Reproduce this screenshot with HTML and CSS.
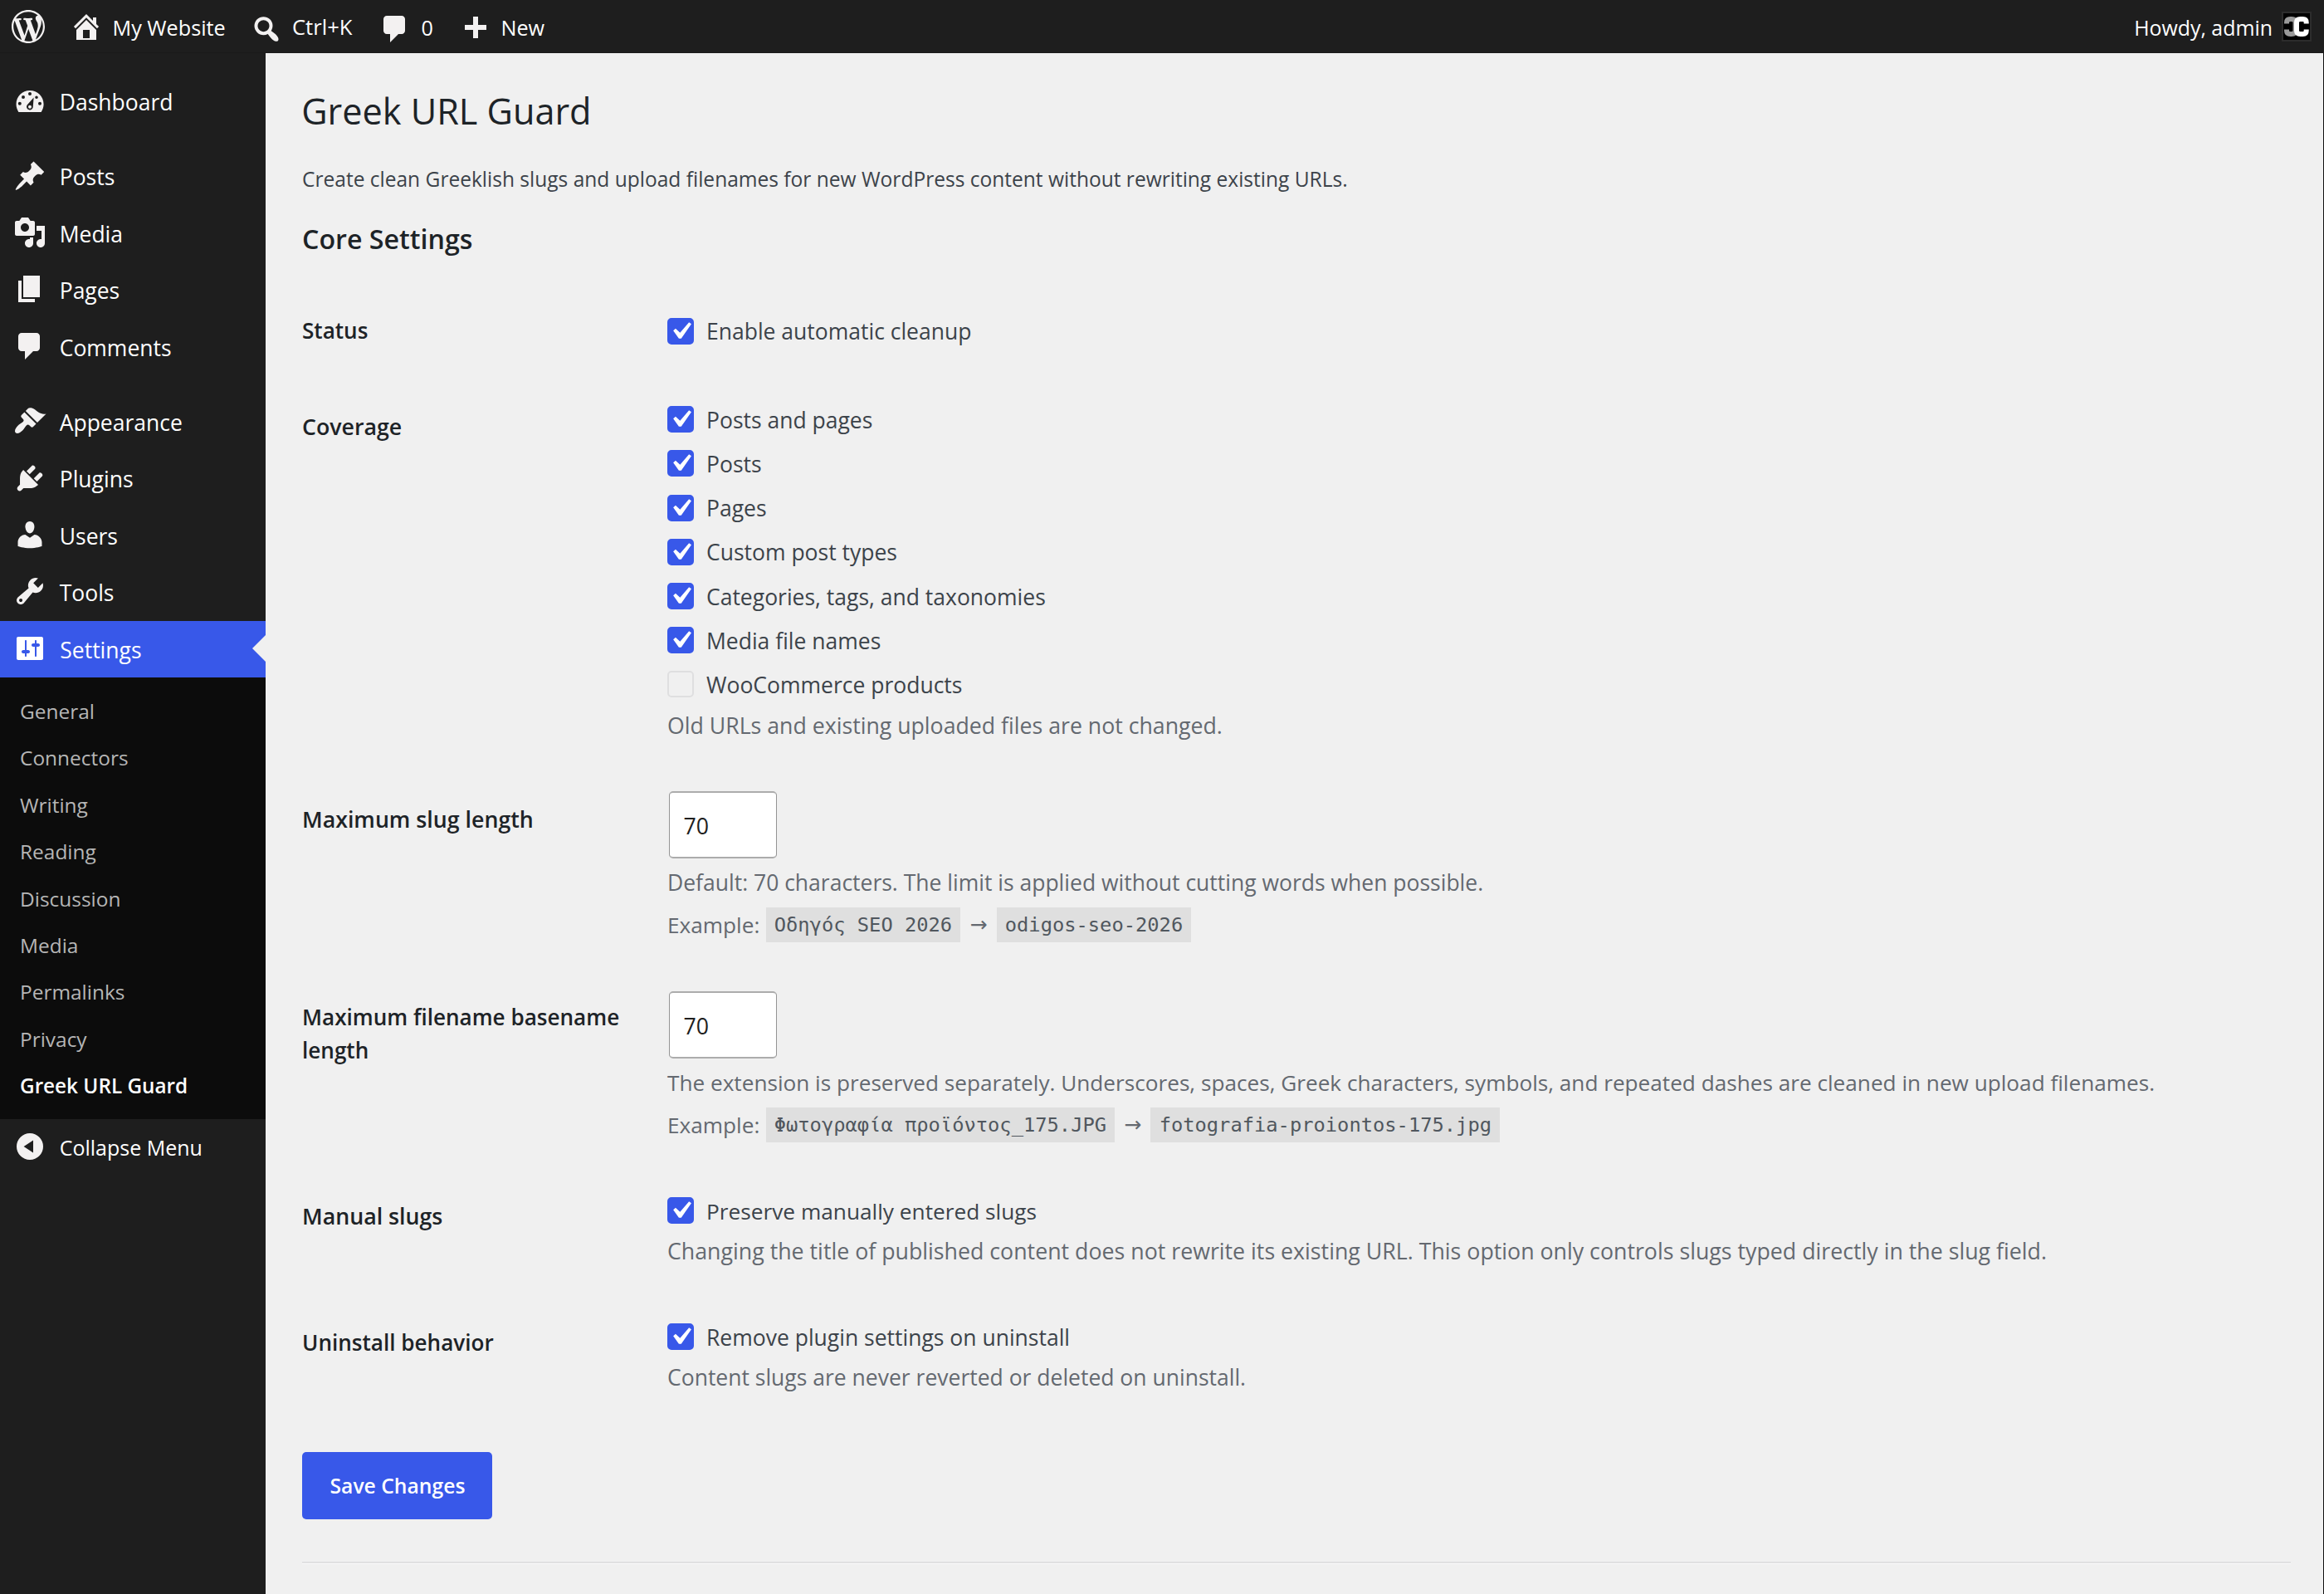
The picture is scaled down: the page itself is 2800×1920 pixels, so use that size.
FILE: index.html
```
<!DOCTYPE html>
<html lang="en">
<head>
<meta charset="utf-8">
<title>Greek URL Guard</title>
<link rel="stylesheet" href="styles.css">
</head>
<body>
<svg class="sprite" aria-hidden="true">
  <symbol id="tick" viewBox="0 0 20 20"><path d="M14.83 4.89l1.34.94-5.81 8.38H9.02L5.78 9.67l1.34-1.25 2.57 2.4z"/></symbol>
  <symbol id="bubble" viewBox="0 0 20 20"><path d="M5 2h9c1.1 0 2 .9 2 2v7c0 1.1-.9 2-2 2h-2l-5 5v-5H5c-1.1 0-2-.9-2-2V4c0-1.1.9-2 2-2z"/></symbol>
</svg>

<header class="topbar">
  <div class="topbar-left">
    <a class="bar-item bar-logo"><svg class="icon" viewBox="0 0 20 20"><path d="M20 10c0-5.51-4.49-10-10-10C4.48 0 0 4.49 0 10c0 5.52 4.48 10 10 10 5.51 0 10-4.48 10-10zM7.78 15.37L4.37 6.22c.55-.02 1.17-.08 1.17-.08.5-.06.44-1.13-.06-1.11 0 0-1.45.11-2.37.11-.18 0-.37 0-.58-.01C4.12 2.69 6.87 1.11 10 1.11c2.33 0 4.45.87 6.05 2.34-.68-.11-1.65.39-1.65 1.58 0 .74.45 1.36.9 2.1.35.61.55 1.36.55 2.46 0 1.49-1.4 5-1.4 5l-3.03-8.37c.54-.02.82-.17.82-.17.5-.05.44-1.25-.06-1.22 0 0-1.44.12-2.38.12-.87 0-2.33-.12-2.33-.12-.5-.03-.56 1.2-.06 1.22l.92.08 1.26 3.41zM17.41 10c.24-.64.74-1.87.43-4.25.7 1.29 1.05 2.71 1.05 4.25 0 3.29-1.73 6.24-4.4 7.78.97-2.59 1.94-5.2 2.92-7.78zM6.1 18.09C3.12 16.65 1.11 13.53 1.11 10c0-1.3.23-2.48.72-3.59C3.25 10.3 4.67 14.2 6.1 18.09zm4.03-6.63l2.58 6.98c-.86.29-1.76.45-2.71.45-.79 0-1.57-.11-2.29-.33.81-2.38 1.62-4.74 2.42-7.1z"/></svg></a>
    <a class="bar-item bar-site"><svg class="icon" viewBox="0 0 20 20"><path d="M16 8.5l1.53 1.53-1.06 1.06L10 4.6l-6.47 6.49-1.06-1.06L10 2.5l4 4v-2h2v4zm-6-2.46l6 5.99V18H4v-5.97zM12 17v-5H8v5h4z"/></svg><span>My Website</span></a>
    <a class="bar-item bar-search"><svg class="icon" viewBox="0 0 20 20"><path d="M12.14 4.18c1.87 1.87 2.11 4.75.72 6.89.12.1.22.21.36.31.2.16.47.36.81.59.34.24.56.39.66.47.42.31.73.57.94.78.32.32.6.65.84 1 .25.35.44.69.59 1.04.14.35.21.68.18 1-.02.32-.14.59-.36.81s-.49.34-.81.36c-.31.02-.65-.04-.99-.19-.35-.14-.7-.34-1.04-.59-.35-.24-.68-.52-1-.84-.21-.21-.47-.52-.77-.93-.1-.13-.25-.35-.47-.66-.22-.32-.4-.57-.56-.78-.16-.2-.29-.35-.44-.5-2.07 1.09-4.69.76-6.44-.98-2.14-2.15-2.14-5.64 0-7.78 2.15-2.15 5.63-2.15 7.78 0zm-1.41 6.36c1.36-1.37 1.36-3.58 0-4.95-1.37-1.37-3.59-1.37-4.95 0-1.37 1.37-1.37 3.58 0 4.95 1.36 1.37 3.58 1.37 4.95 0z"/></svg><span>Ctrl+K</span></a>
    <a class="bar-item bar-comments"><svg class="icon"><use href="#bubble"/></svg><span>0</span></a>
    <a class="bar-item bar-new"><svg class="icon" viewBox="0 0 20 20"><path d="M17 7v3h-5v5H9v-5H4V7h5V2h3v5h5z"/></svg><span>New</span></a>
  </div>
  <a class="account"><span>Howdy, admin</span>
    <svg class="avatar" viewBox="0 0 36 36"><rect class="avatar-frame" x="0" y="0" width="36" height="36"/><rect x="2" y="2" width="32" height="32"/><path class="mark-back" d="M6 14.500V13Q6 9 10.500 9H12Q16.500 9 16.500 13V23Q16.500 27 12 27H10.500Q6 27 6 23V21.500"/><path class="mark-front" d="M29.700 14.500V13Q29.700 9 25.500 9H22.500Q18 9 18 13V23Q18 27 22.500 27H25.500Q29.700 27 29.700 23V21.500"/></svg>
  </a>
</header>

<div class="layout">
  <nav class="sidebar">
    <a class="menu-item"><svg class="icon" viewBox="0 0 20 20"><path fill-rule="evenodd" d="M3.200 17h13.600c.9-1.300 1.500-2.900 1.500-4.700C18.300 7.700 14.600 4 10 4S1.750 7.700 1.750 12.300c0 1.800.6 3.400 1.450 4.700zM10 5a1 1 0 1 1 0 2 1 1 0 0 1 0-2zM6 7a1 1 0 1 1 0 2 1 1 0 0 1 0-2zM14 7.200a.9.9 0 1 1 0 1.800.9.9 0 0 1 0-1.800zM3.900 10.900a1 1 0 1 1 0 2 1 1 0 0 1 0-2zM16 10.900a1 1 0 1 1 0 2 1 1 0 0 1 0-2zM12.300 8.300l-.4 5.300a1.950 1.950 0 1 1-3.600-.9zM10 12.900a1 1 0 1 0 0 2 1 1 0 0 0 0-2z"/></svg><span>Dashboard</span></a>
    <div class="menu-gap"></div>
    <a class="menu-item"><svg class="icon" viewBox="0 0 20 20"><path d="M10.440 3.020l1.820-1.820 6.360 6.350-1.830 1.820c-1.050-.68-2.480-.57-3.410.36l-.75.75c-.92.93-1.040 2.350-.35 3.410l-1.830 1.820-2.410-2.410-2.800 2.790c-.42.42-3.380 2.710-3.800 2.290s1.860-3.390 2.280-3.810l2.790-2.790L4.100 9.360l1.830-1.820c1.050.69 2.480.57 3.400-.36l.75-.75c.93-.92 1.050-2.350.36-3.410z"/></svg><span>Posts</span></a>
    <a class="menu-item"><svg class="icon" viewBox="0 0 20 20"><path d="M13 11V4c0-.55-.45-1-1-1h-1.670L9 1H5L3.670 3H2c-.55 0-1 .45-1 1v7c0 .55.45 1 1 1h10c.55 0 1-.45 1-1zM7 4.500c1.380 0 2.500 1.120 2.500 2.500S8.380 9.500 7 9.500 4.500 8.380 4.500 7 5.620 4.500 7 4.500zM14 6h5v10.500c0 1.380-1.120 2.500-2.500 2.500S14 17.880 14 16.500s1.120-2.500 2.500-2.500c.17 0 .34.02.5.05V9h-3V6zm-4 8.050V13h2v3.500c0 1.380-1.120 2.500-2.500 2.500S7 17.880 7 16.500 8.120 14 9.500 14c.17 0 .34.02.5.05z"/></svg><span>Media</span></a>
    <a class="menu-item"><svg class="icon" viewBox="0 0 20 20"><path d="M6 15V2h10v13H6zm-1 1h8v2H3V5h2v11z"/></svg><span>Pages</span></a>
    <a class="menu-item"><svg class="icon"><use href="#bubble"/></svg><span>Comments</span></a>
    <div class="menu-gap"></div>
    <a class="menu-item"><svg class="icon" viewBox="0 0 20 20"><path d="M14.480 11.060L7.410 3.990l1.500-1.500c.5-.56 2.300-.47 3.510.32 1.210.8 1.430 1.280 2.910 2.100 1.180.64 2.450 1.260 4.450.85zm-.71.71L6.700 4.700 4.930 6.470c-.39.39-.39 1.020 0 1.410l1.060 1.060c.39.39.39 1.030 0 1.420-.6.6-1.430 1.110-2.210 1.690-.35.26-.7.53-1.010.84C1.430 14.230.4 16.080 1.400 17.070c.99 1 2.840-.03 4.180-1.360.31-.31.58-.66.85-1.020.57-.78 1.080-1.610 1.690-2.210.39-.39 1.020-.39 1.410 0l1.060 1.060c.39.39 1.020.39 1.410 0z"/></svg><span>Appearance</span></a>
    <a class="menu-item"><svg class="icon" viewBox="0 0 20 20"><path d="M13.110 4.360L9.870 7.600 8 5.730l3.240-3.240c.35-.34 1.050-.2 1.560.32.52.51.66 1.210.31 1.550zm-8 1.770l.91-1.120 9.010 9.010-1.190.84c-.71.71-2.630 1.160-3.820 1.160H6.140L4.900 17.260c-.59.59-1.540.59-2.120 0-.59-.58-.59-1.530 0-2.120l1.240-1.240v-3.880c0-1.130.4-3.190 1.090-3.890zm7.260 3.970l3.240-3.240c.34-.35 1.040-.21 1.550.31.52.51.66 1.210.31 1.550l-3.240 3.250z"/></svg><span>Plugins</span></a>
    <a class="menu-item"><svg class="icon" viewBox="0 0 20 20"><path d="M10 9.250c-2.270 0-2.730-3.440-2.730-3.440C7 4.020 7.820 2 9.970 2c2.160 0 2.980 2.020 2.710 3.810 0 0-.41 3.440-2.680 3.440zm0 2.570L12.720 10c2.390 0 4.520 2.330 4.520 4.530v2.490s-3.650 1.130-7.240 1.130c-3.650 0-7.240-1.130-7.240-1.130v-2.490c0-2.250 1.940-4.480 4.470-4.480z"/></svg><span>Users</span></a>
    <a class="menu-item"><svg class="icon" viewBox="0 0 20 20"><path d="M16.680 9.770c-1.340 1.340-3.300 1.670-4.950.99l-5.410 6.520c-.99.99-2.590.99-3.580 0s-.99-2.590 0-3.570l6.520-5.420c-.68-1.650-.35-3.610.99-4.950 1.280-1.280 3.120-1.620 4.720-1.060l-2.890 2.890 2.820 2.820 2.860-2.870c.53 1.580.18 3.390-1.080 4.650zM3.810 16.210c.4.39 1.040.39 1.430 0 .4-.4.4-1.040 0-1.430-.39-.4-1.030-.4-1.430 0-.39.39-.39 1.030 0 1.430z"/></svg><span>Tools</span></a>
    <a class="menu-item is-current"><svg class="icon" viewBox="0 0 20 20"><path d="M18 16V4c0-.55-.45-1-1-1H3c-.55 0-1 .45-1 1v12c0 .55.45 1 1 1h14c.55 0 1-.45 1-1zM8 11h1c.55 0 1 .45 1 1s-.45 1-1 1H8v1.500c0 .28-.22.5-.5.5s-.5-.22-.5-.5V13H6c-.55 0-1-.45-1-1s.45-1 1-1h1V5.500c0-.28.22-.5.5-.5s.5.22.5.5V11zm5-2h-1c-.55 0-1-.45-1-1s.45-1 1-1h1V5.500c0-.28.22-.5.5-.5s.5.22.5.5V7h1c.55 0 1 .45 1 1s-.45 1-1 1h-1v5.500c0 .28-.22.5-.5.5s-.5-.22-.5-.5V9z"/></svg><span>Settings</span></a>
    <div class="submenu">
      <a>General</a><a>Connectors</a><a>Writing</a><a>Reading</a><a>Discussion</a><a>Media</a><a>Permalinks</a><a>Privacy</a><a class="is-active">Greek URL Guard</a>
    </div>
    <a class="menu-item collapse"><svg class="icon" viewBox="0 0 20 20"><path fill-rule="evenodd" d="M10 2a8 8 0 1 1 0 16 8 8 0 0 1 0-16zM6.300 10L12 13.800V6.200z"/></svg><span>Collapse Menu</span></a>
  </nav>

  <main class="content">
    <h1>Greek URL Guard</h1>
    <p class="intro">Create clean Greeklish slugs and upload filenames for new WordPress content without rewriting existing URLs.</p>
    <h2>Core Settings</h2>

    <form class="form">
      <div class="row row-status">
        <div class="label">Status</div>
        <div class="field">
          <label class="option"><span class="check on"><svg><use href="#tick"/></svg></span><span class="option-text">Enable automatic cleanup</span></label>
        </div>
      </div>
      <div class="row row-coverage">
        <div class="label wide">Coverage</div>
        <div class="field">
          <label class="option"><span class="check on"><svg><use href="#tick"/></svg></span><span class="option-text">Posts and pages</span></label>
          <label class="option"><span class="check on"><svg><use href="#tick"/></svg></span><span class="option-text">Posts</span></label>
          <label class="option"><span class="check on"><svg><use href="#tick"/></svg></span><span class="option-text">Pages</span></label>
          <label class="option"><span class="check on"><svg><use href="#tick"/></svg></span><span class="option-text">Custom post types</span></label>
          <label class="option"><span class="check on"><svg><use href="#tick"/></svg></span><span class="option-text">Categories, tags, and taxonomies</span></label>
          <label class="option"><span class="check on"><svg><use href="#tick"/></svg></span><span class="option-text">Media file names</span></label>
          <label class="option"><span class="check"></span><span class="option-text">WooCommerce products</span></label>
          <p class="hint loose">Old URLs and existing uploaded files are not changed.</p>
        </div>
      </div>
      <div class="row row-slug">
        <div class="label wide">Maximum slug length</div>
        <div class="field">
          <input class="number" type="text" value="70">
          <p class="hint">Default: 70 characters. The limit is applied without cutting words when possible.</p>
          <div class="example"><span class="example-label">Example:</span><code>Οδηγός SEO 2026</code><span class="arrow">→</span><code>odigos-seo-2026</code></div>
        </div>
      </div>
      <div class="row row-filename">
        <div class="label">Maximum filename basename length</div>
        <div class="field">
          <input class="number" type="text" value="70">
          <p class="hint tight">The extension is preserved separately. Underscores, spaces, Greek characters, symbols, and repeated dashes are cleaned in new upload filenames.</p>
          <div class="example"><span class="example-label">Example:</span><code>Φωτογραφία προϊόντος_175.JPG</code><span class="arrow">→</span><code>fotografia-proiontos-175.jpg</code></div>
        </div>
      </div>
      <div class="row row-manual">
        <div class="label wide">Manual slugs</div>
        <div class="field">
          <label class="option"><span class="check on"><svg><use href="#tick"/></svg></span><span class="option-text tight">Preserve manually entered slugs</span></label>
          <p class="hint loose">Changing the title of published content does not rewrite its existing URL. This option only controls slugs typed directly in the slug field.</p>
        </div>
      </div>
      <div class="row row-uninstall">
        <div class="label">Uninstall behavior</div>
        <div class="field">
          <label class="option"><span class="check on"><svg><use href="#tick"/></svg></span><span class="option-text">Remove plugin settings on uninstall</span></label>
          <p class="hint">Content slugs are never reverted or deleted on uninstall.</p>
        </div>
      </div>
      <button class="save" type="button">Save Changes</button>
    </form>
    <hr>
  </main>
</div>
</body>
</html>
```
FILE: styles.css
```
* { box-sizing: border-box; }
html, body { margin: 0; height: 1920px; overflow: hidden; }
body {
  background: #f0f0f0;
  color: #3c434a;
  font-family: "Open Sans", "Noto Sans", sans-serif;
  font-size: 26.5px;
  font-kerning: normal;
  display: flex;
  flex-direction: column;
}
h1, h2, p { margin: 0; }
.sprite { display: none; }
.icon { width: 40px; height: 40px; flex: none; fill: #f3f1f1; }

/* Top toolbar */
.topbar {
  height: 64px;
  flex: none;
  background: #1e1e1e;
  border-bottom: 1px solid #1a1a1a;
  color: #fff;
  font-size: 25.2px;
  line-height: 66px;
  display: flex;
  justify-content: space-between;
  padding: 0 15px 0 14px;
}
.topbar-left { display: flex; }
.bar-item { display: flex; gap: 11.5px; white-space: nowrap; }
.bar-item .icon { margin-top: 12px; }
.bar-logo { width: 70px; }
.bar-site { width: 216.5px; }
.bar-search { width: 155.5px; font-size: 25.6px; }
.bar-search .icon, .bar-comments .icon { margin-top: 15px; }
.bar-comments { width: 96px; }
.bar-new .icon { margin-top: 16px; }
.account { display: flex; gap: 11px; font-size: 24.9px; }
.avatar { width: 36px; height: 36px; margin-top: 14px; }
.avatar-frame { fill: #2c2c2c; }
.mark-back, .mark-front { fill: none; stroke-width: 6px; }
.mark-back { stroke: #999; }
.mark-front { stroke: #fff; }

/* Sidebar */
.layout { display: flex; flex: 1; min-height: 0; }
.sidebar {
  width: 320px;
  flex: none;
  background: #1e1e1e;
  color: #fff;
  padding-top: 24px;
}
.menu-item {
  display: flex;
  gap: 15.8px;
  height: 68.4px;
  line-height: 70.6px;
  padding-left: 15.9px;
}
.menu-item .icon { margin-top: 13.3px; }
.menu-gap { height: 22px; }
.is-current { background: #3858e9; position: relative; }
.is-current .icon { fill: #fff; margin-left: .6px; }
.is-current::after {
  content: "";
  position: absolute;
  right: 0;
  top: 17.5px;
  border: 16px solid transparent;
  border-left-width: 0;
  border-right-color: #f0f0f0;
}
.submenu {
  background: #0c0c0c;
  color: #b6b6b6;
  font-size: 24.45px;
  line-height: 56.4px;
  padding: 13px 0 11.4px 24px;
  display: flex;
  flex-direction: column;
}
.submenu .is-active { color: #fff; font-weight: 600; font-size: 24.3px; }
.collapse { font-size: 25px; line-height: 69px; }

/* Settings page */
.content {
  flex: 1;
  padding: 40px 39px 0 44px;
  border-right: 1px solid #111;
}
h1 {
  color: #1d2327;
  font-size: 43.2px;
  line-height: 60px;
  font-weight: 400;
  margin-left: -.8px;
}
.intro { font-size: 24.54px; line-height: 40px; margin-top: 31.5px; }
h2 {
  color: #1d2327;
  font-size: 32.2px;
  line-height: 44px;
  font-weight: 600;
  margin-top: 30px;
}
.form { padding-top: 28.2px; }
.row { display: grid; grid-template-columns: 440px 1fr; }
.row-status { height: 116px; }
.row-coverage { height: 473px; }
.row-slug { height: 238.2px; }
.row-filename { height: 239.8px; }
.row-manual { height: 152px; }
.row-uninstall { height: 192.3px; }
.label {
  color: #1d2327;
  font-size: 26.1px;
  font-weight: 600;
  line-height: 40px;
  padding: 40px 20px 0 0;
}
.label.wide { font-size: 26.75px; }
.field { padding-top: 26.7px; }
.row-status .field { padding-top: 34.4px; }
.row-coverage .field { padding-top: 25px; }
.row-filename .field { padding-top: 29.6px; }

.option { display: flex; align-items: center; gap: 15px; height: 53.15px; }
.option-text { line-height: 36px; padding-top: 1.6px; }
.option-text.tight { font-size: 26.25px; }
.check {
  width: 32px;
  height: 32px;
  border: 2px solid #dfdfe0;
  border-radius: 5px;
  display: grid;
  place-items: center;
}
.check.on { background: #3858e9; border-color: #3858e9; }
.check svg { width: 42px; height: 42px; fill: #fff; margin: -7px; }

.hint { color: #646970; line-height: 40px; white-space: nowrap; }
.hint.loose { font-size: 26.75px; }
.hint.tight { font-size: 26.18px; }
.row-coverage .hint { margin-top: 3.6px; font-size: 26.7px; }
.row-manual .hint, .row-uninstall .hint { margin-top: 2.1px; }

.number {
  display: block;
  width: 130px;
  height: 81px;
  margin: 0 0 9px 2px;
  padding: 2px 0 0 16.5px;
  border: 1px solid #949494;
  border-width: 2px 1px;
  border-color: #acacac #949494;
  border-radius: 5px;
  background: #fff;
  color: #1e1e1e;
  font-family: inherit;
  font-size: 26.7px;
}
.example {
  display: flex;
  color: #646970;
  line-height: 42.5px;
  margin-top: 10px;
}
.example-label { width: 118.5px; font-size: 26.2px; }
.example code {
  background: #dfdfdf;
  color: #50575e;
  font: 23.75px/43.5px "DejaVu Sans Mono", monospace;
  height: 41.5px;
  padding: 0 10.2px;
}
.arrow {
  width: 43.2px;
  text-align: center;
  font-family: "DejaVu Sans", sans-serif;
  font-size: 25px;
  line-height: 42px;
}

.save {
  display: block;
  width: 229px;
  height: 81px;
  padding: 0 0 0 1px;
  border: 0;
  border-radius: 5px;
  background: #3858e9;
  color: #fff;
  font-family: inherit;
  font-size: 24.7px;
  font-weight: 600;
}
hr {
  margin: 51px 0 0;
  border: 0;
  border-top: 2px solid #e0e0e1;
  border-bottom: 1px solid #fafafa;
}
```
